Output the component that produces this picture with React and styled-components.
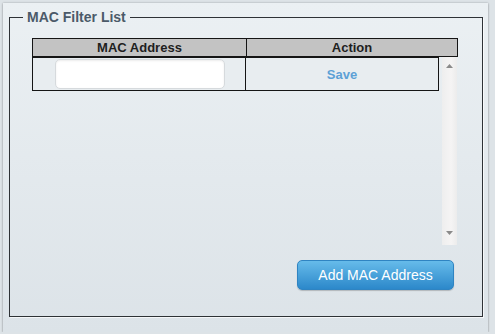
import React from "react";
import styled, { createGlobalStyle } from "styled-components";

const GlobalStyle = createGlobalStyle`
  html, body {
    margin: 0;
    padding: 0;
    background: #dde3e7;
    font-family: "Liberation Sans", Arial, sans-serif;
  }
`;

const Panel = styled.div`
  margin: 3px 0 0 3px;
  width: 485px;
  height: 329px;
  box-sizing: border-box;
  padding: 6px 5px 15px 6px;
  display: flex;
  flex-direction: column;
  background: linear-gradient(#ebf0f3, #dce3e8);
  box-shadow: 0 0 2px rgba(0, 0, 0, 0.25), 0 1px 2px rgba(0, 0, 0, 0.2);
`;

const Fieldset = styled.fieldset`
  flex: 1;
  margin: 0;
  padding: 0;
  min-width: 0;
  border: 1px solid #2e3236;
  box-shadow: 1px 1px 0 rgba(255, 255, 255, 0.7);
`;

const Legend = styled.legend`
  margin-left: 13px;
  padding: 0 4px;
  font-size: 14px;
  line-height: 16px;
  font-weight: bold;
  color: #4b5a69;
`;

const Content = styled.div`
  display: flex;
  flex-direction: column;
  padding: 13px 24px 0 22px;
`;

const HeaderRow = styled.div`
  display: grid;
  grid-template-columns: 213px 1fr;
  height: 19px;
  box-sizing: border-box;
  border: 1px solid #151515;
  background: #c3c3c3;
`;

const HeaderCell = styled.div`
  font-size: 13px;
  font-weight: bold;
  line-height: 17px;
  color: #1e1e1e;
  text-align: center;
  border-left: ${(p) => (p.$first ? "none" : "1px solid #151515")};
`;

const Body = styled.div`
  display: flex;
  justify-content: space-between;
  height: 188px;
`;

const Row = styled.div`
  display: grid;
  grid-template-columns: 212px 1fr;
  width: 407px;
  height: 34px;
  box-sizing: border-box;
  border: 1px solid #151515;
  background: #e8edf0;
`;

const InputCell = styled.div`
  display: flex;
  align-items: center;
  padding-left: 22px;
`;

const MacInput = styled.input`
  width: 170px;
  height: 30px;
  box-sizing: border-box;
  border: 1px solid #d6dadd;
  border-radius: 5px;
  background: #fff;
  box-shadow: inset 0 1px 2px rgba(0, 0, 0, 0.08);
  outline: none;
  font-family: inherit;
  font-size: 13px;
  padding: 0 8px;
`;

const ActionCell = styled.div`
  display: flex;
  align-items: center;
  justify-content: center;
  border-left: 1px solid #151515;
`;

const SaveLink = styled.span`
  font-size: 13px;
  font-weight: bold;
  color: #5da1d6;
  cursor: pointer;
`;

const Scrollbar = styled.div`
  width: 15px;
  margin-right: 1px;
  display: flex;
  flex-direction: column;
  justify-content: space-between;
  align-items: center;
  padding: 7px 0 10px;
  box-sizing: border-box;
  background: linear-gradient(90deg, #eeeeee, #f5f4f4 60%, #ececec);
`;

const Arrow = ({ down }) => (
  <svg width="7" height="4" viewBox="0 0 7 4">
    <path d={down ? "M0 0 L7 0 L3.5 4 Z" : "M3.5 0 L7 4 L0 4 Z"} fill="#8a8a8a" />
  </svg>
);

const AddButton = styled.button`
  align-self: flex-end;
  margin: 15px 4px 0 0;
  width: 157px;
  height: 30px;
  border: 1px solid #2f84c2;
  border-radius: 5px;
  background: linear-gradient(#66bbea, #2c88ca);
  box-shadow: 0 1px 1px rgba(0, 0, 0, 0.2);
  color: #fff;
  font-family: inherit;
  font-size: 14px;
  cursor: pointer;
  padding: 0;
`;

export default function App() {
  return (
    <>
      <GlobalStyle />
      <Panel>
        <Fieldset>
          <Legend>MAC Filter List</Legend>
          <Content>
            <HeaderRow>
              <HeaderCell $first>MAC Address</HeaderCell>
              <HeaderCell>Action</HeaderCell>
            </HeaderRow>
            <Body>
              <div>
                <Row>
                  <InputCell>
                    <MacInput type="text" />
                  </InputCell>
                  <ActionCell>
                    <SaveLink>Save</SaveLink>
                  </ActionCell>
                </Row>
              </div>
              <Scrollbar>
                <Arrow />
                <Arrow down />
              </Scrollbar>
            </Body>
            <AddButton>Add MAC Address</AddButton>
          </Content>
        </Fieldset>
      </Panel>
    </>
  );
}
